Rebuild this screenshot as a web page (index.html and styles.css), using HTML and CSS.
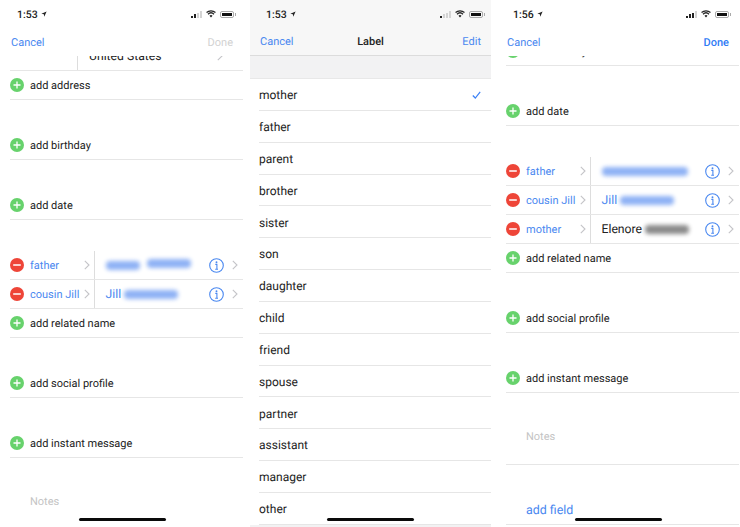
FILE: index.html
```html
<!DOCTYPE html>
<html lang="en">
<head>
  <meta charset="UTF-8" />
  <title>Edit Contact</title>
  <link rel="stylesheet" href="styles.css">
</head>
<body>
  <svg class="defs" width="0" height="0">
    <symbol id="arrow" viewBox="0 0 8 8"><path d="M7.500 .5 L.5 3.700 L3.800 4.200 L4.300 7.500 Z" fill="currentColor"/></symbol>
    <symbol id="wifi" viewBox="0 0 16 12"><path d="M8 11.500 L5.600 8.800 A3.600 3.600 0 0 1 10.400 8.800 Z M3.900 7 A6 6 0 0 1 12.100 7 L13.500 5.400 A8.200 8.200 0 0 0 2.500 5.400 Z M1.500 4.300 A9.800 9.800 0 0 1 14.500 4.300 L15.800 2.900 A11.800 11.800 0 0 0 .2 2.900 Z" fill="currentColor"/></symbol>
    <symbol id="plus" viewBox="0 0 14 14"><circle cx="7" cy="7" r="7" fill="#67d26c"/><path d="M3.500 7 H10.500 M7 3.500 V10.500" stroke="#fff" stroke-width="1.300"/></symbol>
    <symbol id="minus" viewBox="0 0 14 14"><circle cx="7" cy="7" r="7" fill="#ee4538"/><path d="M3.200 7 H10.800" stroke="#fff" stroke-width="1.500"/></symbol>
    <symbol id="info" viewBox="0 0 15 15"><circle cx="7.500" cy="7.500" r="6.800" fill="none" stroke="currentColor" stroke-width="1.100"/><circle cx="7.500" cy="4.200" r=".95" fill="currentColor"/><path d="M6.300 6.400 H7.900 V11 M6.200 11.200 H9" fill="none" stroke="currentColor" stroke-width="1.100"/></symbol>
    <symbol id="chev" viewBox="0 0 6 10"><path d="M.8 .8 L5 5 L.8 9.200" fill="none" stroke="currentColor" stroke-width="1.100"/></symbol>
    <symbol id="check" viewBox="0 0 9 8"><path d="M.8 4.500 L3.300 7 L8.200 .8" fill="none" stroke="currentColor" stroke-width="1.200"/></symbol>
  </svg>

  <!-- first screen -->
  <section class="phone phone-one">
    <div class="status">
      <span class="time">1:53</span><svg class="loc"><use href="#arrow"/></svg>
      <span class="status-right">
        <span class="signal"><i class="on"></i><i class="on"></i><i></i><i></i></span>
        <svg class="wifi"><use href="#wifi"/></svg>
        <span class="battery"><b></b></span>
      </span>
    </div>
    <div class="nav">
      <span class="link">Cancel</span>
      <span class="link off">Done</span>
    </div>
    <div class="form">
      <div class="clip clip-one">
        <div class="row address"><span class="addr-gap"></span><span class="addr-text">United States</span><svg class="chev addr-chev"><use href="#chev"/></svg></div>
      </div>
      <div class="row"><svg class="ico"><use href="#plus"/></svg>add address</div>
      <div class="row gap"><svg class="ico"><use href="#plus"/></svg>add birthday</div>
      <div class="row gap"><svg class="ico"><use href="#plus"/></svg>add date</div>
      <div class="row rel gap">
        <svg class="ico"><use href="#minus"/></svg><span class="rel-label">father</span><svg class="chev"><use href="#chev"/></svg>
        <span class="rel-name wide-gap"><span class="smudge blue w-34"></span><span class="smudge blue w-46 up"></span></span><svg class="info"><use href="#info"/></svg><svg class="chev"><use href="#chev"/></svg>
      </div>
      <div class="row rel">
        <svg class="ico"><use href="#minus"/></svg><span class="rel-label">cousin Jill</span><svg class="chev"><use href="#chev"/></svg>
        <span class="rel-name">Jill <span class="smudge blue w-54"></span></span><svg class="info"><use href="#info"/></svg><svg class="chev"><use href="#chev"/></svg>
      </div>
      <div class="row"><svg class="ico"><use href="#plus"/></svg>add related name</div>
      <div class="row gap"><svg class="ico"><use href="#plus"/></svg>add social profile</div>
      <div class="row gap"><svg class="ico"><use href="#plus"/></svg>add instant message</div>
      <div class="notes gap">Notes</div>
    </div>
    <div class="home"></div>
  </section>

  <!-- label picker -->
  <section class="phone picker">
    <div class="status">
      <span class="time">1:53</span><svg class="loc"><use href="#arrow"/></svg>
      <span class="status-right">
        <span class="signal"><i class="on"></i><i></i><i></i><i></i></span>
        <svg class="wifi"><use href="#wifi"/></svg>
        <span class="battery"><b></b></span>
      </span>
    </div>
    <div class="nav">
      <span class="link">Cancel</span>
      <span class="nav-title">Label</span>
      <span class="link nav-end">Edit</span>
    </div>
    <ul class="labels">
      <li>mother<svg class="check"><use href="#check"/></svg></li>
      <li>father</li>
      <li>parent</li>
      <li>brother</li>
      <li>sister</li>
      <li>son</li>
      <li>daughter</li>
      <li>child</li>
      <li>friend</li>
      <li>spouse</li>
      <li>partner</li>
      <li>assistant</li>
      <li>manager</li>
      <li>other</li>
    </ul>
    <div class="home"></div>
  </section>

  <!-- third screen -->
  <section class="phone phone-three">
    <div class="status">
      <span class="time">1:56</span><svg class="loc"><use href="#arrow"/></svg>
      <span class="status-right">
        <span class="signal"><i class="on"></i><i class="on"></i><i class="on"></i><i></i></span>
        <svg class="wifi"><use href="#wifi"/></svg>
        <span class="battery"><b></b></span>
      </span>
    </div>
    <div class="nav">
      <span class="link">Cancel</span>
      <span class="link strong">Done</span>
    </div>
    <div class="form">
      <div class="clip clip-three">
        <div class="row"><svg class="ico"><use href="#plus"/></svg>add birthday</div>
      </div>
      <div class="row gap"><svg class="ico"><use href="#plus"/></svg>add date</div>
      <div class="row rel gap">
        <svg class="ico"><use href="#minus"/></svg><span class="rel-label">father</span><svg class="chev"><use href="#chev"/></svg>
        <span class="rel-name"><span class="smudge blue w-86"></span></span><svg class="info"><use href="#info"/></svg><svg class="chev"><use href="#chev"/></svg>
      </div>
      <div class="row rel">
        <svg class="ico"><use href="#minus"/></svg><span class="rel-label">cousin Jill</span><svg class="chev"><use href="#chev"/></svg>
        <span class="rel-name">Jill <span class="smudge blue w-54"></span></span><svg class="info"><use href="#info"/></svg><svg class="chev"><use href="#chev"/></svg>
      </div>
      <div class="row rel">
        <svg class="ico"><use href="#minus"/></svg><span class="rel-label">mother</span><svg class="chev"><use href="#chev"/></svg>
        <span class="rel-name dark">Elenore <span class="smudge grey w-44"></span></span><svg class="info"><use href="#info"/></svg><svg class="chev"><use href="#chev"/></svg>
      </div>
      <div class="row"><svg class="ico"><use href="#plus"/></svg>add related name</div>
      <div class="row gap"><svg class="ico"><use href="#plus"/></svg>add social profile</div>
      <div class="row gap"><svg class="ico"><use href="#plus"/></svg>add instant message</div>
      <div class="notes gap">Notes</div>
      <div class="row gap add-field">add field</div>
    </div>
    <div class="home"></div>
  </section>
</body>
</html>
```

FILE: styles.css
```css
* {
  box-sizing: border-box;
}

html, body {
  margin: 0;
  height: 527px;
  overflow: hidden;
}

body {
  display: flex;
  gap: 5px;
  background: #fff;
  color: #222;
  font-family: Roboto, "Liberation Sans", sans-serif;
  font-size: 11px;
  text-rendering: geometricPrecision;
}

.defs {
  position: absolute;
}

.phone {
  position: relative;
  height: 527px;
  overflow: hidden;
  background: #fff;
}

.phone-one {
  width: 245px;
}

.picker {
  width: 241px;
  background: #f2f2f3;
}

.phone-three {
  width: 244px;
}

/* status bar */
.status {
  display: flex;
  align-items: center;
  height: 28px;
  padding: 0 11px 0 17px;
  color: #222;
}

.picker .status,
.picker .nav {
  background: #f7f7f7;
}

.picker .status {
  padding: 0 8px 0 16px;
}

.time {
  font-size: 10.5px;
  font-weight: 500;
}

.loc {
  width: 6px;
  height: 6px;
  margin-left: 3px;
}

.status-right {
  display: flex;
  align-items: center;
  margin-left: auto;
}

.signal {
  display: flex;
  align-items: flex-end;
  gap: 1px;
  height: 7px;
}

.signal i {
  width: 2px;
  background: #d4d4d4;
}

.signal i.on {
  background: #222;
}

.signal i:nth-child(1) { height: 2px; }
.signal i:nth-child(2) { height: 4px; }
.signal i:nth-child(3) { height: 5px; }
.signal i:nth-child(4) { height: 7px; }

.wifi {
  width: 10px;
  height: 8px;
  margin-left: 4px;
}

.battery {
  position: relative;
  width: 14px;
  height: 7px;
  margin-left: 4px;
  padding: 1px;
  border: 1px solid #aaa;
  border-radius: 2px;
}

/* battery nub */
.battery::after {
  content: "";
  position: absolute;
  top: 1px;
  right: -3px;
  width: 1px;
  height: 3px;
  background: #aaa;
}

.battery b {
  display: block;
  width: 10px;
  height: 100%;
  background: #111;
}

/* nav bar */
.nav {
  position: relative;
  z-index: 1;
  display: flex;
  align-items: center;
  justify-content: space-between;
  height: 28px;
  padding: 0 12px 0 11px;
  background: #fff;
}

.picker .nav {
  display: grid;
  grid-template-columns: 1fr auto 1fr;
  padding: 0 10px 0 10px;
  border-bottom: 1px solid #dcdcdc;
}

.nav-end {
  justify-self: end;
}

.phone-three .nav {
  padding: 0 11px 0 11px;
}

.link {
  color: #4a88f0;
}

.link.off {
  color: #d2d2d2;
}

.link.strong {
  color: #2f7bf5;
  font-weight: 500;
}

.nav-title {
  color: #222;
  font-weight: 500;
}

/* form rows */
.form {
  padding-left: 10px;
  padding-right: 2px;
}

.phone-three .form {
  padding-right: 1px;
}

.row {
  display: flex;
  flex: none;
  align-items: center;
  width: 100%;
  height: 29px;
  border-bottom: 1px solid #e6e6e6;
  white-space: nowrap;
}

.gap {
  margin-top: 31px;
}

.clip {
  display: flex;
  align-items: flex-end;
  overflow: hidden;
}

.clip-one {
  height: 15px;
}

.clip-three {
  height: 10px;
}

.ico {
  flex: none;
  width: 14px;
  height: 14px;
  margin-right: 6px;
}

.address {
  font-size: 12.2px;
}

.addr-gap {
  align-self: stretch;
  width: 68px;
  border-right: 1px solid #ddd;
}

.addr-text {
  margin-left: 11px;
}

.addr-chev {
  margin-left: auto;
  margin-right: 20px;
}

.rel {
  color: #4a88f0;
}

.rel-label {
  width: 54px;
}

.chev {
  flex: none;
  width: 6px;
  height: 10px;
  color: #c4c4c8;
}

.rel-name {
  display: flex;
  align-items: center;
  gap: 3px;
  align-self: stretch;
  width: 115px;
  margin-left: 4px;
  padding-left: 10.5px;
  border-left: 1px solid #ddd;
  font-size: 12.2px;
}

.rel-name.wide-gap {
  gap: 7px;
}

.rel-name.dark {
  color: #222;
}

.info {
  flex: none;
  width: 15px;
  height: 15px;
  margin-right: 8px;
  color: #4a88f0;
}

.smudge {
  display: block;
  height: 9px;
  border-radius: 4px;
  filter: blur(2px);
}

.smudge.up {
  margin-top: -3px;
}

.smudge.blue {
  background: #8fb2f5;
}

.smudge.grey {
  background: #8a8a8a;
}

.w-34 { width: 34px; }
.w-46 { width: 44px; }
.w-86 { width: 86px; }
.w-54 { width: 54px; }
.w-44 { width: 44px; }

.notes {
  height: 41px;
  padding: 6px 0 0 20px;
  border-bottom: 1px solid #e6e6e6;
  color: #c4c4c4;
}

.add-field {
  padding-left: 20px;
  font-size: 12.4px;
  color: #4a88f0;
}

/* label picker list */
.labels {
  margin: 22px 0 0;
  padding: 0 0 0 9px;
  list-style: none;
  background: #fff;
  border-top: 1px solid #e8e8e8;
  font-size: 12px;
}

.labels li {
  display: flex;
  align-items: center;
  justify-content: space-between;
  height: 31.85px;
  padding: 1.5px 10px 0 0;
  border-bottom: 1px solid #e6e6e6;
}

.check {
  width: 9px;
  height: 8px;
  color: #3d82f6;
}

.home {
  position: absolute;
  bottom: 6px;
  left: 50%;
  width: 87px;
  height: 3px;
  margin-left: -43.5px;
  border-radius: 2px;
  background: #0a0a0a;
}
```
